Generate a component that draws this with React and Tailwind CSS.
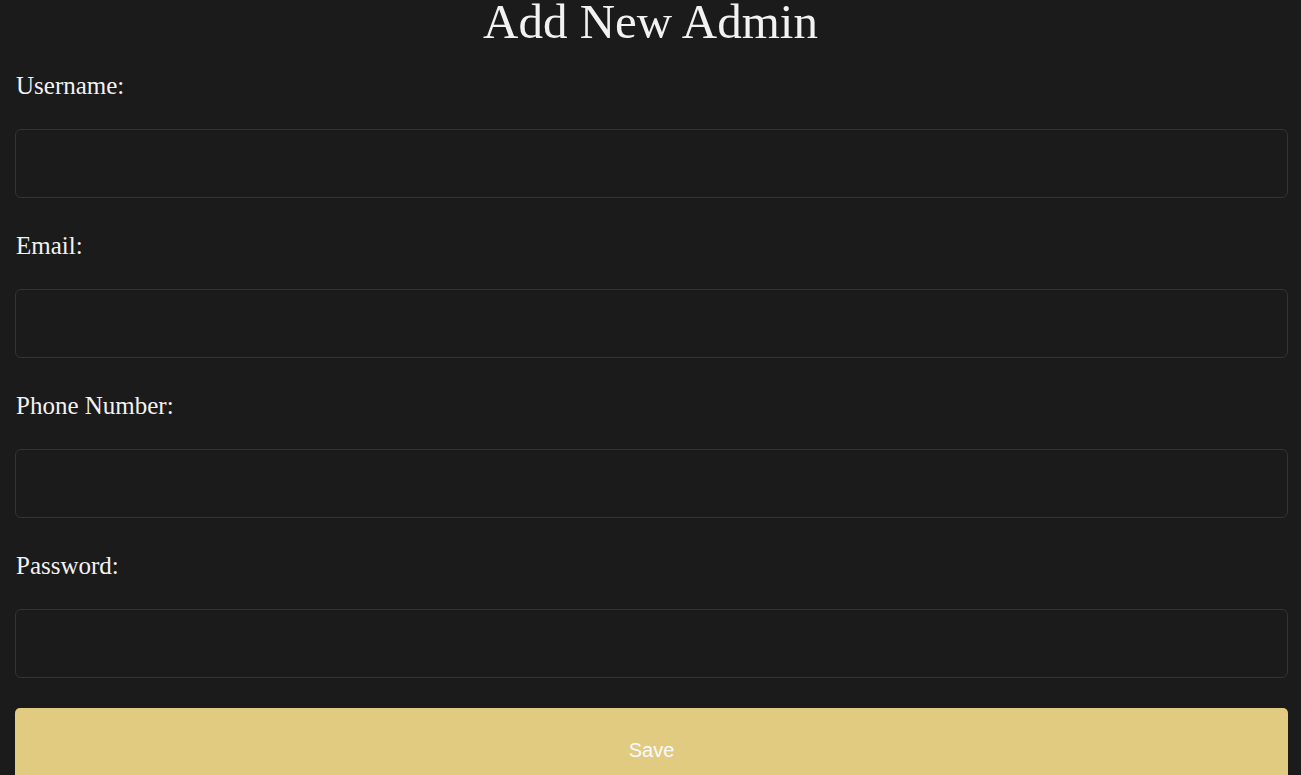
import React, { useState } from 'react';

const fields = [
  { name: 'username', label: 'Username:', type: 'text' },
  { name: 'email', label: 'Email:', type: 'email' },
  { name: 'phone', label: 'Phone Number:', type: 'tel' },
  { name: 'password', label: 'Password:', type: 'password' },
];

export default function App() {
  const [form, setForm] = useState({ username: '', email: '', phone: '', password: '' });

  const onChange = (e) => setForm({ ...form, [e.target.name]: e.target.value });

  return (
    <div className="min-h-screen bg-[#1b1b1b] text-[#f2f2f2] font-['Liberation_Serif',serif]">
      <h1 className="text-center text-[49px] leading-[43px] font-normal">Add New Admin</h1>

      <form className="pl-[15px] pr-[13px] pt-[25px]" onSubmit={(e) => e.preventDefault()}>
        {fields.map((f) => (
          <div key={f.name} className="mb-[30px]">
            <label htmlFor={f.name} className="block pl-px text-[25px] leading-[36px] mb-[25px]">
              {f.label}
            </label>
            <input
              id={f.name}
              name={f.name}
              type={f.type}
              value={form[f.name]}
              onChange={onChange}
              className="block w-full h-[69px] rounded-md border border-[#343434] bg-[#1b1b1b] px-3 text-[18px] text-white outline-none"
            />
          </div>
        ))}

        <button
          type="submit"
          className="mt-px block w-full h-[84px] rounded-[5px] bg-[#e1cb80] text-[20px] text-[#fafafa] font-['Liberation_Sans',sans-serif]"
        >
          Save
        </button>
      </form>
    </div>
  );
}
